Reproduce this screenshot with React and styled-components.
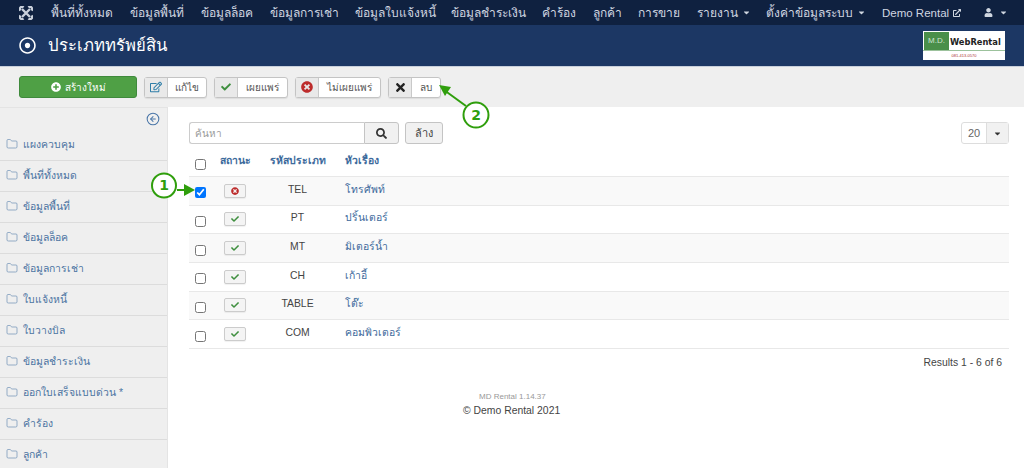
import React from 'react';
import styled, { createGlobalStyle } from 'styled-components';
import {
  FaCheck, FaTimes, FaTimesCircle, FaPlusCircle, FaRegEdit, FaSearch,
  FaUser, FaCaretDown, FaRegDotCircle, FaExternalLinkAlt,
} from 'react-icons/fa';
import { CircleArrowLeft, Folder } from 'lucide-react';

const NAV_ITEMS = [
  { label: 'พื้นที่ทั้งหมด', gap: 17 },
  { label: 'ข้อมูลพื้นที่', gap: 17 },
  { label: 'ข้อมูลล็อค', gap: 17 },
  { label: 'ข้อมูลการเช่า', gap: 16 },
  { label: 'ข้อมูลใบแจ้งหนี้', gap: 15 },
  { label: 'ข้อมูลชำระเงิน', gap: 16 },
  { label: 'คำร้อง', gap: 17 },
  { label: 'ลูกค้า', gap: 16 },
  { label: 'การขาย', gap: 17 },
  { label: 'รายงาน', gap: 15, caret: true },
  { label: 'ตั้งค่าข้อมูลระบบ', gap: 16, caret: true },
];

const SIDE_ITEMS = [
  'แผงควบคุม', 'พื้นที่ทั้งหมด', 'ข้อมูลพื้นที่', 'ข้อมูลล็อค', 'ข้อมูลการเช่า', 'ใบแจ้งหนี้',
  'ใบวางบิล', 'ข้อมูลชำระเงิน', 'ออกใบเสร็จแบบด่วน *', 'คำร้อง', 'ลูกค้า',
];

const ROWS = [
  { id: 1, code: 'TEL', title: 'โทรศัพท์', on: false, checked: true },
  { id: 2, code: 'PT', title: 'ปริ้นเตอร์', on: true },
  { id: 3, code: 'MT', title: 'มิเตอร์น้ำ', on: true },
  { id: 4, code: 'CH', title: 'เก้าอี้', on: true },
  { id: 5, code: 'TABLE', title: 'โต๊ะ', on: true },
  { id: 6, code: 'COM', title: 'คอมพิวเตอร์', on: true },
];

function JoomlaMark() {
  return (
    <svg width="14" height="14" viewBox="0 0 14 14" fill="none" stroke="#c9d0db" strokeWidth="2.4">
      <path d="M3 3l8 8M11 3l-8 8" />
      <path d="M1.5 4.5a2 2 0 0 1 3-3M9.5 1.5a2 2 0 0 1 3 3M12.5 9.5a2 2 0 0 1-3 3M4.5 12.5a2 2 0 0 1-3-3" />
    </svg>
  );
}

function App() {
  return (
    <Page>
      <GlobalStyle />
      <TopBar>
        <Brand><JoomlaMark /></Brand>
        {NAV_ITEMS.map(item => (
          <NavLink key={item.label} $gap={item.gap}>
            {item.label}
            {item.caret && <FaCaretDown size={9} />}
          </NavLink>
        ))}
        <NavLink $latin>
          Demo Rental
          <FaExternalLinkAlt size={8} />
        </NavLink>
        <UserMenu>
          <FaUser size={9} />
          <FaCaretDown size={9} />
        </UserMenu>
      </TopBar>

      <Header>
        <HeaderTitle>
          <FaRegDotCircle size={17} />
          <h1>ประเภททรัพย์สิน</h1>
        </HeaderTitle>
        <Logo>
          <LogoTop>
            <LogoBadge>M.D.</LogoBadge>
            <LogoName>WebRental</LogoName>
          </LogoTop>
          <LogoPhone>081-413-0570</LogoPhone>
        </Logo>
      </Header>

      <Toolbar>
        <CreateButton>
          <FaPlusCircle size={10} />
          สร้างใหม่
        </CreateButton>
        <ToolButton>
          <ToolIcon $color="#2f7ea8"><FaRegEdit size={12} /></ToolIcon>
          <ToolLabel $width={38}>แก้ไข</ToolLabel>
        </ToolButton>
        <ToolButton>
          <ToolIcon $color="#3f8f3f"><FaCheck size={10} /></ToolIcon>
          <ToolLabel $width={49}>เผยแพร่</ToolLabel>
        </ToolButton>
        <ToolButton>
          <ToolIcon $color="#bd2c2c"><FaTimesCircle size={12} /></ToolIcon>
          <ToolLabel $width={61}>ไม่เผยแพร่</ToolLabel>
        </ToolButton>
        <ToolButton>
          <ToolIcon $color="#222"><FaTimes size={13} /></ToolIcon>
          <ToolLabel $width={28}>ลบ</ToolLabel>
        </ToolButton>
      </Toolbar>

      <Body>
        <Sidebar>
          <CollapseRow>
            <CircleArrowLeft size={14} strokeWidth={1.8} />
          </CollapseRow>
          {SIDE_ITEMS.map(label => (
            <SideItem key={label}>
              <Folder size={12} strokeWidth={1.4} />
              {label}
            </SideItem>
          ))}
        </Sidebar>

        <Main>
          <FilterBar>
            <SearchGroup>
              <SearchInput placeholder="ค้นหา" readOnly />
              <SearchButton><FaSearch size={11} /></SearchButton>
            </SearchGroup>
            <ClearButton>ล้าง</ClearButton>
            <LimitSelect>
              <span>20</span>
              <LimitCaret><FaCaretDown size={9} /></LimitCaret>
            </LimitSelect>
          </FilterBar>

          <Table>
            <thead>
              <tr>
                <CheckHead><Check type="checkbox" readOnly /></CheckHead>
                <StatusHead>สถานะ</StatusHead>
                <CodeHead>รหัสประเภท</CodeHead>
                <TitleHead>หัวเรื่อง</TitleHead>
              </tr>
            </thead>
            <tbody>
              {ROWS.map(row => (
                <Row key={row.id} $odd={row.id % 2 === 1}>
                  <CheckCell><Check type="checkbox" checked={!!row.checked} readOnly /></CheckCell>
                  <StatusCell>
                    <StateButton $on={row.on}>
                      {row.on ? <FaCheck size={8} /> : <FaTimesCircle size={8} />}
                    </StateButton>
                  </StatusCell>
                  <CodeCell>{row.code}</CodeCell>
                  <TitleCell>{row.title}</TitleCell>
                </Row>
              ))}
            </tbody>
          </Table>

          <Results>Results 1 - 6 of 6</Results>
          <Version>MD Rental 1.14.37</Version>
          <Copyright>© Demo Rental 2021</Copyright>
        </Main>
      </Body>

      <Callout viewBox="0 0 1024 468">
        <g fill="none" stroke="#2f9e0c" strokeWidth="2">
          <circle cx="164" cy="185.5" r="12" fill="#fff" />
          <circle cx="476" cy="115" r="12.5" fill="#fff" />
          <path d="M177 190h14" />
          <path d="M466 106L444 90" />
        </g>
        <path d="M195 190l-11-6v12z" fill="#2f9e0c" />
        <path d="M439 85l12 2-6 9z" fill="#2f9e0c" />
      </Callout>
      <CalloutNumber $x={164} $y={185}>1</CalloutNumber>
      <CalloutNumber $x={476} $y={115}>2</CalloutNumber>
    </Page>
  );
}

const GlobalStyle = createGlobalStyle`
  html, body {
    margin: 0;
    padding: 0;
    background: #fff;
    font-family: "Liberation Sans", "Noto Sans", sans-serif;
  }
`;

const Page = styled.div`
  position: relative;
  width: 1024px;
  height: 468px;
  overflow: hidden;
  font-size: 10.4px;
  color: #333;
`;

const TopBar = styled.nav`
  display: flex;
  align-items: center;
  height: 25px;
  padding-left: 19px;
  background: #0f2140;
  color: #cfd6e0;
`;

const Brand = styled.div`
  display: flex;
  width: 32px;
`;

const NavLink = styled.a`
  display: flex;
  align-items: center;
  gap: 4px;
  margin-right: ${({ $gap }) => $gap || 0}px;
  font-size: ${({ $latin }) => ($latin ? '11.5px' : '12px')};
  white-space: nowrap;
`;

const UserMenu = styled.div`
  display: flex;
  align-items: center;
  gap: 6px;
  margin-left: auto;
  margin-right: 16px;
`;

const Header = styled.header`
  display: flex;
  align-items: center;
  justify-content: space-between;
  box-sizing: border-box;
  height: 42px;
  padding: 0 19px;
  background: #1c3764;
  border-bottom: 1px solid #c8cfdb;
  color: #fff;
`;

const HeaderTitle = styled.div`
  display: flex;
  align-items: center;
  gap: 12px;

  & h1 {
    margin: -2px 0 0;
    font-size: 16.7px;
    font-weight: 400;
  }
`;

const Logo = styled.div`
  display: flex;
  flex-direction: column;
  width: 82px;
  height: 29px;
  margin-top: -1px;
  background: #fff;
`;

const LogoTop = styled.div`
  display: flex;
  height: 20px;
  border-bottom: 1px solid #9cc29c;
`;

const LogoBadge = styled.div`
  display: flex;
  align-items: center;
  justify-content: center;
  width: 25px;
  margin-left: 1px;
  margin-top: 1px;
  background: #4a8f4a;
  color: #cfe3cf;
  font-size: 8px;
`;

const LogoName = styled.div`
  align-self: flex-end;
  margin-left: 1px;
  color: #222;
  font-family: "DejaVu Sans", sans-serif;
  font-size: 8.3px;
  font-weight: 700;
  line-height: 15px;
`;

const LogoPhone = styled.div`
  color: #a33;
  font-size: 4px;
  line-height: 9px;
  text-align: center;
`;

const Toolbar = styled.div`
  display: flex;
  align-items: center;
  gap: 7px;
  height: 40px;
  padding: 0 19px;
  background: #efefef;
`;

const CreateButton = styled.button`
  display: flex;
  align-items: center;
  justify-content: center;
  gap: 4px;
  box-sizing: border-box;
  width: 118px;
  height: 22px;
  padding: 0;
  border: 1px solid #3f8a3c;
  border-radius: 3px;
  background: #4fa045;
  color: #fff;
  font: inherit;
  font-size: 10px;
`;

const ToolButton = styled.div`
  display: flex;
  box-sizing: border-box;
  height: 21px;
  border: 1px solid #c4c4c4;
  border-radius: 3px;
  background: #fff;
  box-shadow: 0 1px 1px rgba(0, 0, 0, 0.08);
`;

const ToolIcon = styled.span`
  display: flex;
  align-items: center;
  justify-content: center;
  box-sizing: border-box;
  width: 23px;
  border-right: 1px solid #c9c9c9;
  background: #e9e9e9;
  color: ${({ $color }) => $color};
`;

const ToolLabel = styled.span`
  display: flex;
  align-items: center;
  justify-content: center;
  width: ${({ $width }) => $width}px;
  color: #555;
  font-size: 10px;
`;

const Body = styled.div`
  display: flex;
  height: 361px;
`;

const Sidebar = styled.aside`
  flex: none;
  box-sizing: border-box;
  width: 168px;
  border-top: 1px solid #e4e4e4;
  border-right: 1px solid #e4e4e4;
  background: #efefef;
`;

const CollapseRow = styled.div`
  display: flex;
  justify-content: flex-end;
  height: 22px;
  padding: 4px 7px 0 0;
  box-sizing: border-box;
  color: #4a76a8;
`;

const SideItem = styled.div`
  display: flex;
  align-items: center;
  gap: 5px;
  box-sizing: border-box;
  height: 31px;
  padding: 0 0 2px 6px;
  border-bottom: 1px solid #dcdcdc;
  color: #4c74a2;
  white-space: nowrap;

  & svg {
    color: #6d8fb5;
  }
`;

const Main = styled.main`
  flex: 1;
  padding: 15px 15px 0 21px;
`;

const FilterBar = styled.div`
  display: flex;
  align-items: center;
  gap: 6px;
  height: 22px;
  margin-bottom: 10px;
`;

const SearchGroup = styled.div`
  display: flex;
  height: 22px;
`;

const SearchInput = styled.input`
  box-sizing: border-box;
  width: 175px;
  height: 22px;
  padding: 0 5px;
  border: 1px solid #ccc;
  border-right: 0;
  border-radius: 3px 0 0 3px;
  font-family: inherit;
  font-size: 10px;
  outline: none;

  &::placeholder {
    color: #999;
  }
`;

const SearchButton = styled.button`
  display: flex;
  align-items: center;
  justify-content: center;
  box-sizing: border-box;
  width: 35px;
  height: 22px;
  border: 1px solid #c4c4c4;
  border-radius: 0 3px 3px 0;
  background: #f1f1f1;
  color: #333;
`;

const ClearButton = styled.button`
  box-sizing: border-box;
  width: 38px;
  height: 22px;
  padding: 0;
  border: 1px solid #c4c4c4;
  border-radius: 3px;
  background: #f1f1f1;
  color: #444;
  font: inherit;
  font-size: 11px;
`;

const LimitSelect = styled.div`
  display: flex;
  align-items: center;
  box-sizing: border-box;
  width: 48px;
  height: 22px;
  margin-left: auto;
  border: 1px solid #ddd;
  border-radius: 3px;
  color: #666;
  font-size: 11px;

  & span {
    width: 24px;
    text-align: center;
  }
`;

const LimitCaret = styled.div`
  display: flex;
  flex: 1;
  align-items: center;
  justify-content: center;
  height: 100%;
  border-left: 1px solid #ddd;
  background: #f1f1f1;
  color: #333;
`;

const Table = styled.table`
  width: 820px;
  border-collapse: collapse;
  table-layout: fixed;
`;

const headCell = `
  height: 22px;
  padding: 0 0 8px;
  box-sizing: border-box;
  color: #3d6a9c;
  font-size: 10.4px;
  font-weight: 700;
  line-height: 14px;
`;

const CheckHead = styled.th`
  ${headCell}
  width: 23px;
  padding: 0 0 2px 6px;
  text-align: left;
`;

const StatusHead = styled.th`
  ${headCell}
  width: 46px;
  text-align: center;
`;

const CodeHead = styled.th`
  ${headCell}
  width: 79px;
  text-align: center;
`;

const TitleHead = styled.th`
  ${headCell}
  padding-left: 8px;
  text-align: left;
`;

const Row = styled.tr`
  height: 28.67px;
  border-top: 1px solid #e8e8e8;
  background: ${({ $odd }) => ($odd ? '#f9f9f9' : '#fff')};

  &:last-child {
    border-bottom: 1px solid #e8e8e8;
  }
`;

const CheckCell = styled.td`
  padding: 4px 0 0 6px;
`;

const StatusCell = styled.td`
  padding: 0;
  text-align: center;
`;

const CodeCell = styled.td`
  padding: 0 0 3px;
  color: #444;
  text-align: center;
`;

const TitleCell = styled.td`
  padding: 0 0 3px 8px;
  color: #3d6a9c;
`;

const Check = styled.input`
  display: block;
  width: 11px;
  height: 11px;
  margin: 0;
`;

const StateButton = styled.span`
  display: inline-flex;
  align-items: center;
  justify-content: center;
  box-sizing: border-box;
  width: 22px;
  height: 14px;
  border: 1px solid #ccc;
  border-radius: 2px;
  background: #f4f4f4;
  box-shadow: 0 1px 1px rgba(0, 0, 0, 0.06);
  color: ${({ $on }) => ($on ? '#3f8f3f' : '#bd2c2c')};
  vertical-align: middle;
`;

const Results = styled.div`
  margin-top: 7px;
  padding-right: 7px;
  color: #444;
  line-height: 13px;
  text-align: right;
`;

const Version = styled.div`
  margin-top: 23px;
  margin-left: 290px;
  color: #999;
  font-size: 8px;
  line-height: 10px;
`;

const Copyright = styled.div`
  margin-top: 2px;
  margin-left: 274px;
  color: #444;
  line-height: 13px;
`;

const Callout = styled.svg`
  position: absolute;
  top: 0;
  left: 0;
  width: 1024px;
  height: 468px;
  pointer-events: none;
`;

const CalloutNumber = styled.span`
  position: absolute;
  top: ${({ $y }) => $y - 10}px;
  left: ${({ $x }) => $x - 10}px;
  width: 20px;
  color: #2f9e0c;
  font-family: "DejaVu Sans", sans-serif;
  font-size: 14px;
  font-weight: 700;
  line-height: 20px;
  text-align: center;
`;

export default App;
